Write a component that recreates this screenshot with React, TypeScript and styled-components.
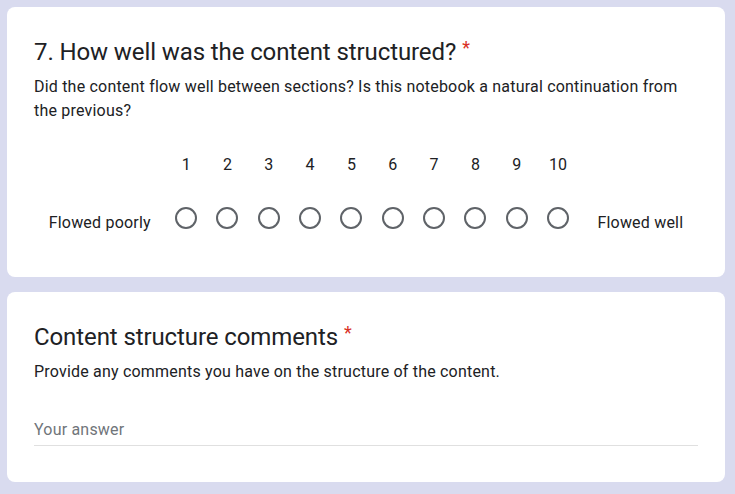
import React from "react";
import styled, { createGlobalStyle } from "styled-components";

const GlobalStyle = createGlobalStyle`
  html, body {
    margin: 0;
    padding: 0;
    background: #d9dbef;
  }
  body {
    font-family: Roboto, "Liberation Sans", Arial, sans-serif;
    color: #202124;
  }
`;

const Page = styled.main`
  display: flex;
  flex-direction: column;
  gap: 15px;
  padding: 7px;
  width: 718px;
`;

const Card = styled.section<{ $padBottom: number }>`
  background: #ffffff;
  border-radius: 8px;
  padding: 29px 27px ${(p) => p.$padBottom}px 27px;
  display: flex;
  flex-direction: column;
`;

const Title = styled.h2`
  margin: 0;
  font-size: 24px;
  line-height: 32px;
  font-weight: 400;
  letter-spacing: -0.1px;
  color: #202124;
`;

const Required = styled.span`
  display: inline-block;
  vertical-align: top;
  font-size: 18px;
  line-height: 18px;
  margin-left: 6px;
  margin-top: 3px;
  color: #d93025;
`;

const Description = styled.p`
  margin: 7px 0 0 0;
  font-size: 16px;
  line-height: 24px;
  letter-spacing: 0.2px;
  color: #202124;
`;

const Scale = styled.div`
  display: flex;
  align-items: flex-end;
  margin-top: 30px;
`;

const EndLabel = styled.div<{ $side: "start" | "end" }>`
  flex: 1 1 auto;
  text-align: center;
  padding-left: ${(p) => (p.$side === "end" ? "4px" : "0")};
  font-size: 16px;
  line-height: 24px;
  letter-spacing: 0.2px;
  color: #202124;
`;

const Column = styled.div`
  width: 41.33px;
  flex: 0 0 41.33px;
  display: flex;
  flex-direction: column;
  align-items: center;
  gap: 30px;
  padding-bottom: 6px;
`;

const Number = styled.span`
  font-size: 16px;
  line-height: 24px;
  color: #202124;
`;

const Radio = styled.span`
  display: block;
  box-sizing: border-box;
  width: 22px;
  height: 22px;
  border: 2px solid #5f6368;
  border-radius: 50%;
`;

const Answer = styled.div`
  margin-top: 34px;
  padding-bottom: 3px;
  border-bottom: 1px solid #e0e0e0;
  font-size: 16px;
  line-height: 24px;
  letter-spacing: 0.2px;
  color: #70757a;
`;

const numbers = [1, 2, 3, 4, 5, 6, 7, 8, 9, 10];

export default function App() {
  return (
    <>
      <GlobalStyle />
      <Page>
        <Card $padBottom={42}>
          <Title>
            7. How well was the content structured?
            <Required>*</Required>
          </Title>
          <Description>
            Did the content flow well between sections? Is this notebook a
            natural continuation from the previous?
          </Description>
          <Scale>
            <EndLabel $side="start">Flowed poorly</EndLabel>
            {numbers.map((n) => (
              <Column key={n}>
                <Number>{n}</Number>
                <Radio role="radio" aria-checked="false" />
              </Column>
            ))}
            <EndLabel $side="end">Flowed well</EndLabel>
          </Scale>
        </Card>
        <Card $padBottom={36}>
          <Title>
            Content structure comments
            <Required>*</Required>
          </Title>
          <Description>
            Provide any comments you have on the structure of the content.
          </Description>
          <Answer>Your answer</Answer>
        </Card>
      </Page>
    </>
  );
}
